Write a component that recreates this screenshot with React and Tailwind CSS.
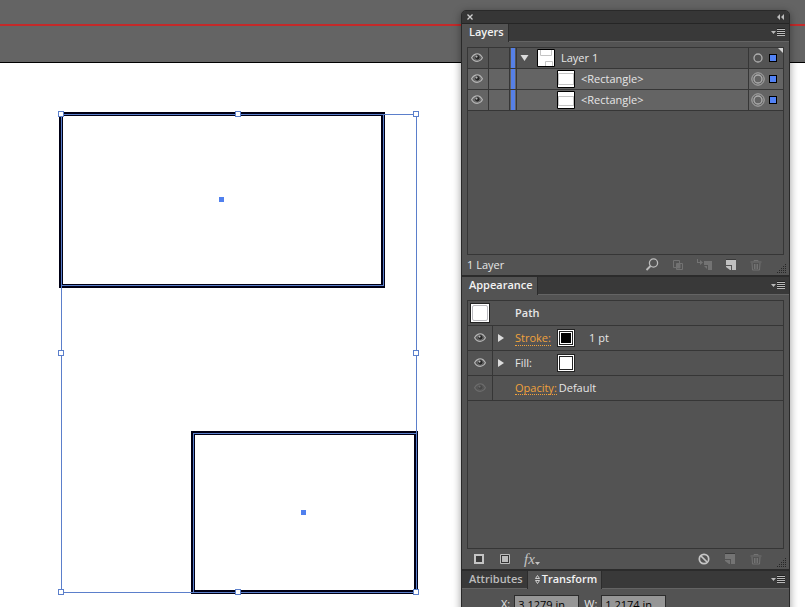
import { useState } from 'react'

const layers = [
  { id: 'rect-a', name: '<Rectangle>', thumb: 'M0 2.5h16M0 13.5h16M.5 3v10M15.5 3v10' },
  { id: 'rect-b', name: '<Rectangle>', thumb: 'M0 4.5h16M0 13.5h16M.5 4v9M15.5 4v9' }
]

function EyeIcon({ dim }) {
  return (
    <svg width="12" height="10" viewBox="0 0 12 10" fill="none" className={dim ? 'text-[#6c6c6c]' : 'text-[#b4b4b4]'}>
      <path d="M.6 4.700C2 2.300 4 .8 6.200.8s4 1.500 5.200 4C10.200 7 8.300 8.300 6.100 8.300S2 7.100.6 4.700z" stroke="currentColor" strokeWidth="1.200" />
      <circle cx="6.300" cy="4.300" r="2.700" fill={dim ? '#474747' : '#262626'} stroke="currentColor" strokeWidth=".4" />
      <circle cx="5.500" cy="3.600" r="1.100" fill="currentColor" />
    </svg>
  )
}

function MenuIcon() {
  return (
    <svg width="14" height="9" viewBox="0 0 14 9" fill="#b9b9b9">
      <path d="M0 3h5L2.500 6z" />
      <path d="M6 1h8v1H6zM6 3h8v1H6zM6 5h8v1H6zM6 7h8v1H6z" />
      <path d="M6 0h8v1H6zM6 2h8v1H6zM6 4h8v1H6zM6 6h8v1H6z" fill="#222" />
    </svg>
  )
}

function NewIcon({ dim }) {
  return (
    <svg width="12" height="12" viewBox="0 0 12 12" fill={dim ? '#747474' : '#c0c0c0'}>
      <path d="M1 1h10v10H7V6H1z" />
      <path d="M1 7h5v4H5L1 8z" />
      <path d="M1 0h10v1H1z" fill="#3a3a3a" />
    </svg>
  )
}

function TrashIcon() {
  return (
    <svg width="12" height="12" viewBox="0 0 12 12" fill="none" stroke="#737373">
      <path d="M.5 3h11M4 2.500V1.500h4v1M2 4l.5 7h7l.5-7M4.500 5v5M6 5v5M7.500 5v5" />
    </svg>
  )
}

function SearchIcon() {
  return (
    <svg width="14" height="14" viewBox="0 0 14 14" fill="none" stroke="#bdbdbd">
      <circle cx="8.500" cy="5" r="4.100" strokeWidth="1.300" />
      <path d="M5.500 8L1.500 12" strokeWidth="1.800" />
    </svg>
  )
}

function ClipMaskIcon() {
  return (
    <svg width="12" height="12" viewBox="0 0 12 12" fill="none" stroke="#727272">
      <path d="M1.500 1.500h6v7h-6z" />
      <path d="M4.500 4.500h6v6h-6z" />
      <path d="M5 5h3v4H5z" fill="#727272" />
    </svg>
  )
}

function SublayerIcon() {
  return (
    <svg width="15" height="12" viewBox="0 0 15 12" fill="#737373">
      <path d="M0 0h1v3h2V1l3 2.500L3 6V4H0z" />
      <path d="M7 2h8v9h-4V6H7z" />
      <path d="M7 7h3v3z" />
    </svg>
  )
}

function Grip() {
  return (
    <svg width="10" height="10" viewBox="0 0 10 10" stroke="#262626" strokeDasharray="1 1" className="absolute right-[2px] bottom-px">
      <path d="M8 .5h2M6 2.500h4M4 4.500h6M2 6.500h8M0 8.500h10" />
    </svg>
  )
}

function Tab({ label, active, onClick, children }) {
  return (
    <button
      role="tab"
      aria-selected={active}
      onClick={onClick}
      className={active
        ? 'flex h-[18px] items-center border-r border-[#2c2c2c] bg-[#535353] pr-1 pb-[2px] pl-[7px] font-semibold text-[#f2f2f2]'
        : 'flex h-[18px] items-center border-r border-[#2c2c2c] pr-1 pb-[2px] pl-[7px] font-semibold text-[#bcbcbc]'}
    >
      {children}
      {label}
    </button>
  )
}

function TabBar({ children }) {
  return (
    <div className="flex h-[18px] border-b border-[#646464] bg-[#393939]">
      <div role="tablist" className="flex">{children}</div>
      <button aria-label="Panel menu" className="mr-1 ml-auto flex items-center">
        <MenuIcon />
      </button>
    </div>
  )
}

function LayerRow({ name, thumb, parent }) {
  return (
    <li className={parent
      ? 'relative flex h-[21px] items-stretch border-b border-[#363636] bg-[#535353]'
      : 'relative flex h-[21px] items-stretch border-b border-[#363636] bg-[#646464]'}
    >
      <button aria-label="Toggle visibility" className="flex w-[21px] items-center justify-center border-r border-[#363636] pr-[2px]">
        <EyeIcon />
      </button>
      <button aria-label="Toggle lock" className="w-[21px] border-r border-[#363636]" />
      <span className="mx-px w-1 bg-[#5680e6]" />
      <span className="w-px bg-[#363636]" />
      <div className={parent ? 'flex flex-1 items-center gap-1 pl-[3px]' : 'flex flex-1 items-center gap-1 pl-10'}>
        {parent && (
          <button aria-label="Collapse layer" className="mr-1">
            <svg width="9" height="6" viewBox="0 0 9 6" fill="#dcdcdc"><path d="M.5 0h8L4.500 6z" /></svg>
          </button>
        )}
        <svg width="18" height="18" viewBox="-1 -1 18 18" fill="none" stroke="#c4c4c4">
          <path d="M-.5-.5h17v17h-17z" fill="#fff" stroke="#000" />
          <path d={thumb} />
        </svg>
        <span className="pl-[2px]">{name}</span>
      </div>
      <div className="flex w-[35px] items-center border-l border-[#363636] pl-[2px]">
        <button aria-label={`Target ${name}`}>
          <svg width="14" height="14" viewBox="0 0 14 14" fill="none" stroke="#adadad">
            <circle cx="7" cy="7" r="4" strokeWidth="1.300" />
            {!parent && <circle cx="7" cy="7" r="6.200" />}
          </svg>
        </button>
        <span className="ml-1 size-2 border border-black bg-[#5282f5]" />
      </div>
      {parent && (
        <svg width="5" height="5" viewBox="0 0 5 5" fill="#d6d6d6" className="absolute top-0 right-0"><path d="M0 0h5v5z" /></svg>
      )}
    </li>
  )
}

function AppearanceRow({ dim, expandable, children }) {
  return (
    <div className="flex h-[25px] border-b border-[#363636]">
      <button aria-label="Toggle visibility" className="flex w-[25px] items-center justify-center border-r border-[#363636]">
        <EyeIcon dim={dim} />
      </button>
      <div className="flex w-[22px] items-center pl-[5px]">
        {expandable && (
          <button aria-label="Expand">
            <svg width="6" height="8" viewBox="0 0 6 8" fill="#dcdcdc"><path d="M0 0l6 4-6 4z" /></svg>
          </button>
        )}
      </div>
      <div className="flex flex-1 items-center">{children}</div>
    </div>
  )
}

function Swatch({ label, black }) {
  return (
    <button aria-label={label} className="size-[18px] border border-[#222] bg-white p-px">
      <span className="block size-full border border-[#222] bg-white p-px">
        {black && <span className="block size-full bg-black" />}
      </span>
    </button>
  )
}

function Artboard() {
  const handles = [[61, 114], [238, 114], [416, 114], [61, 353], [416, 353], [61, 592], [238, 592], [416, 592]]
  return (
    <svg width="461" height="607" viewBox="0 0 461 607" fill="none" shapeRendering="crispEdges" className="absolute top-0 left-0">
      <path d="M61 114h322v172H61z" stroke="#000014" strokeWidth="4" />
      <path d="M193 433h223v159H193z" stroke="#000014" strokeWidth="4" />
      <g stroke="#5b7fcb">
        <path d="M61.500 114.500h322v171h-322zM193.500 433.500h223v159h-223z" />
        <path d="M61.500 114.500h355v478h-355z" />
        {handles.map(([x, y]) => (
          <rect key={`${x}-${y}`} x={x - 2.500} y={y - 2.500} width="5" height="5" fill="#fff" />
        ))}
      </g>
      <path d="M219 197h5v5h-5zM301 510h5v5h-5z" fill="#5080ee" />
    </svg>
  )
}

export default function App() {
  const [tab, setTab] = useState('Transform')
  const [x, setX] = useState('3.1279 in')
  const [w, setW] = useState('1.2174 in')

  return (
    <div className="relative h-screen overflow-hidden bg-white font-['Open_Sans',sans-serif] text-[11px] leading-4 text-[#e6e6e6]">
      {/* Pasteboard with the bleed guide */}
      <div className="h-[63px] border-b border-black bg-[#646464] pt-6">
        <div className="h-[2px] bg-[#c42a2a]" />
      </div>
      <Artboard />

      {/* Panel dock */}
      <aside className="absolute top-[10px] right-[15px] w-[329px] overflow-hidden rounded-t-[5px] border border-[#292929] bg-[#535353] shadow-[0_2px_8px_rgba(0,0,0,0.4)]">
        <header className="flex h-[13px] items-center justify-between border-b border-[#252525] bg-[#363636] pr-[5px] pl-[5px]">
          <button aria-label="Close">
            <svg width="6" height="6" viewBox="0 0 6 6" stroke="#d0d0d0" strokeWidth="1.300"><path d="M.5.5l5 5M5.500.5l-5 5" /></svg>
          </button>
          <button aria-label="Collapse">
            <svg width="7" height="6" viewBox="0 0 7 6" fill="#bdbdbd"><path d="M3 0v6L0 3zM7 0v6L4 3z" /></svg>
          </button>
        </header>

        <section aria-label="Layers">
          <TabBar><Tab label="Layers" active /></TabBar>
          <ul className="mx-[5px] mt-[5px] h-[208px] border border-[#363636]">
            <LayerRow parent name="Layer 1" thumb="M2.500 0v5.500h11V0M7.500 16v-4.500h7V16" />
            {layers.map(l => <LayerRow key={l.id} name={l.name} thumb={l.thumb} />)}
          </ul>
          <footer className="relative flex h-5 items-center pr-[27px] pl-[5px]">
            <span>1 Layer</span>
            <div className="ml-auto flex items-center gap-[13px]">
              <button aria-label="Locate object"><SearchIcon /></button>
              <button aria-label="Make clipping mask"><ClipMaskIcon /></button>
              <button aria-label="New sublayer"><SublayerIcon /></button>
              <button aria-label="New layer"><NewIcon /></button>
              <button aria-label="Delete layer"><TrashIcon /></button>
            </div>
            <Grip />
          </footer>
        </section>

        <section aria-label="Appearance" className="border-t-2 border-[#2b2b2b]">
          <TabBar><Tab label="Appearance" active /></TabBar>
          <div className="mx-[5px] mt-[5px] h-[249px] border border-[#363636]">
            <div className="flex h-[25px] items-center border-b border-[#363636] pl-[2px]">
              <span className="size-5 border border-[#222] bg-white p-px">
                <span className="block size-full rounded-[2px] border border-[#b9b9bd]" />
              </span>
              <span className="pl-[25px] font-semibold">Path</span>
            </div>
            <AppearanceRow expandable>
              <div className="w-[42px]">
                <a href="#stroke" className="border-b border-dotted border-[#f0a23c] text-[#f0a23c]">Stroke:</a>
              </div>
              <Swatch label="Stroke colour" black />
              <span className="pl-[14px]">1 pt</span>
            </AppearanceRow>
            <AppearanceRow expandable>
              <span className="w-[42px]">Fill:</span>
              <Swatch label="Fill colour" />
            </AppearanceRow>
            <AppearanceRow dim>
              <a href="#opacity" className="border-b border-dotted border-[#f0a23c] leading-[13px] text-[#f0a23c]">Opacity:</a>
              <span className="pl-[2px]">Default</span>
            </AppearanceRow>
          </div>
          <footer className="relative flex h-5 items-center pr-[27px] pl-3">
            <div className="flex items-center gap-4">
              <button aria-label="Add new stroke">
                <svg width="10" height="10" viewBox="0 0 10 10"><path d="M1 1h8v8H1z" fill="#3b3b3b" stroke="#c4c4c4" strokeWidth="2" /></svg>
              </button>
              <button aria-label="Add new fill">
                <svg width="10" height="10" viewBox="0 0 10 10"><path d="M.5.5h9v9h-9z" fill="#333" stroke="#bbb" /><path d="M2 2h6v6H2z" fill="#bbb" /></svg>
              </button>
              <button aria-label="Add new effect" className="-ml-[2px] flex items-center font-['Liberation_Serif',serif] text-[15px] text-[#c4c4c4] italic">
                fx
                <svg width="5" height="3" viewBox="0 0 5 3" fill="#c4c4c4" className="mt-2"><path d="M0 0h5L2.500 3z" /></svg>
              </button>
            </div>
            <div className="ml-auto flex items-center gap-[14px]">
              <button aria-label="Clear appearance">
                <svg width="12" height="12" viewBox="0 0 12 12" fill="none" stroke="#c6c6c6" strokeWidth="1.700"><circle cx="6" cy="6" r="4.700" /><path d="M3 3l6 6" /></svg>
              </button>
              <button aria-label="Duplicate item"><NewIcon dim /></button>
              <button aria-label="Delete item"><TrashIcon /></button>
            </div>
            <Grip />
          </footer>
        </section>

        <section aria-label="Transform" className="border-t-2 border-[#2b2b2b]">
          <TabBar>
            <Tab label="Attributes" active={tab === 'Attributes'} onClick={() => setTab('Attributes')} />
            <Tab label="Transform" active={tab === 'Transform'} onClick={() => setTab('Transform')}>
              <svg width="5" height="9" viewBox="0 0 5 9" fill="none" stroke="#d0d0d0" className="mr-[2px]"><path d="M.5 3.500l2-3 2 3zM.5 5.500l2 3 2-3z" /></svg>
            </Tab>
          </TabBar>
          <div className="flex items-center gap-1 pt-[6px] pb-3 pl-[39px]">
            <label htmlFor="pos-x">X:</label>
            <input id="pos-x" value={x} onChange={e => setX(e.target.value)} className="h-[18px] w-[65px] border border-[#2c2c2c] bg-[#969696] px-[3px] text-black" />
            <label htmlFor="size-w" className="pl-px">W:</label>
            <input id="size-w" value={w} onChange={e => setW(e.target.value)} className="h-[18px] w-[65px] border border-[#2c2c2c] bg-[#969696] px-[3px] text-black" />
          </div>
        </section>
      </aside>
    </div>
  )
}
